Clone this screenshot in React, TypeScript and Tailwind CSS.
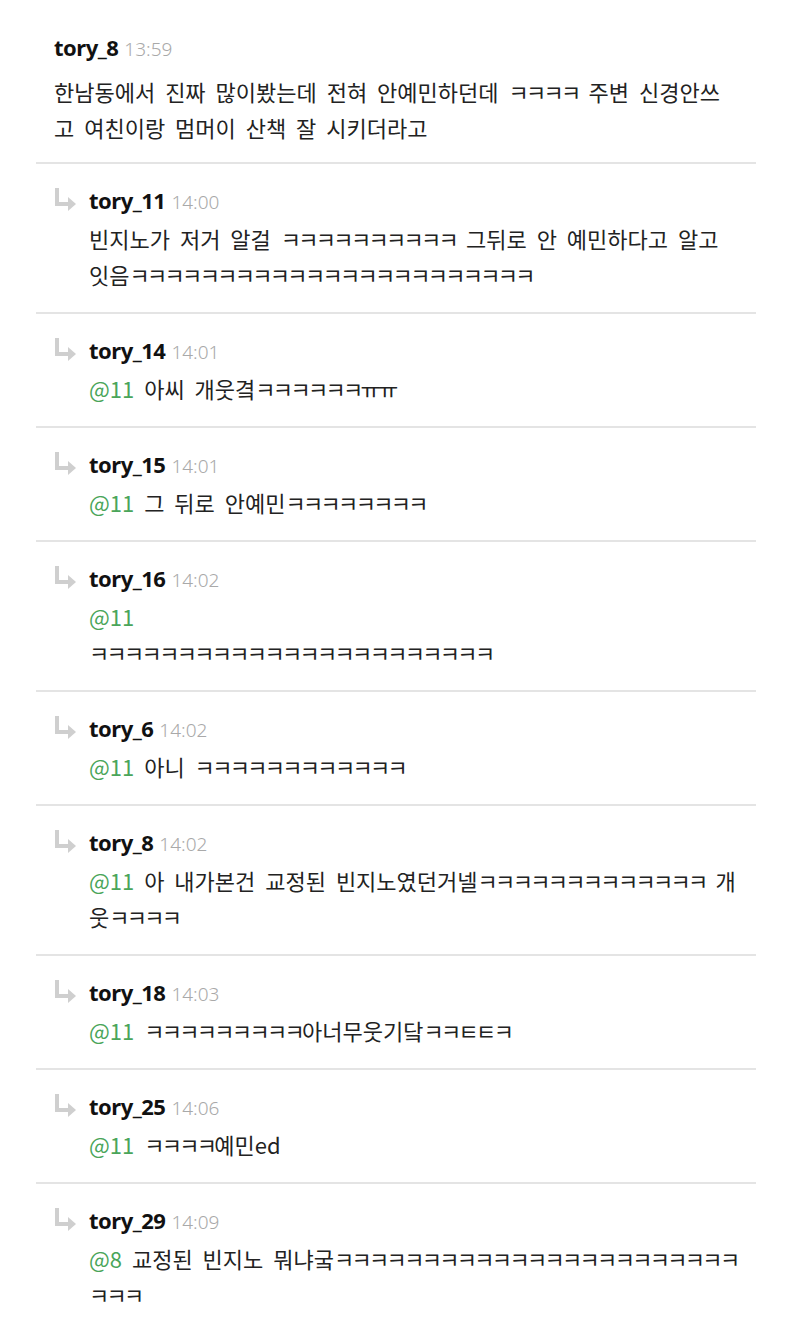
import React from 'react';

interface Reply {
  name: string;
  time: string;
  mention?: string;
  lines: string[];
}

const K = (n: number) => 'ㅋ'.repeat(n);

const replies: Reply[] = [
  { name: 'tory_11', time: '14:00', lines: [`빈지노가 저거 알걸 ${K(10)} 그뒤로 안 예민하다고 알고`, `잇음${K(23)}`] },
  { name: 'tory_14', time: '14:01', mention: '@11', lines: [`아씨 개웃곀${K(6)}ㅠㅠ`] },
  { name: 'tory_15', time: '14:01', mention: '@11', lines: [`그 뒤로 안예민${K(8)}`] },
  { name: 'tory_16', time: '14:02', mention: '@11', lines: ['', K(23)] },
  { name: 'tory_6', time: '14:02', mention: '@11', lines: [`아니 ${K(12)}`] },
  { name: 'tory_8', time: '14:02', mention: '@11', lines: [`아 내가본건 교정된 빈지노였던거넬${K(13)} 개`, `웃${K(4)}`] },
  { name: 'tory_18', time: '14:03', mention: '@11', lines: [`${K(9)}아너무웃기닼ㅋㅋㅌㅌㅋ`] },
  { name: 'tory_25', time: '14:06', mention: '@11', lines: [`${K(4)}예민ed`] },
  { name: 'tory_29', time: '14:09', mention: '@8', lines: [`교정된 빈지노 뭐냐궄${K(23)}`, K(3)] },
];

// jamo runs (ㅋㅋㅋ) are narrower than full syllables in the original font
const Body: React.FC<{ text: string }> = ({ text }) => (
  <>
    {text.split(/([ㄱ-ㅣ]+)/).map((part, i) =>
      /^[ㄱ-ㅣ]+$/.test(part) ? (
        <span key={i} className="tracking-[-2.7px]">
          {part}
        </span>
      ) : (
        <React.Fragment key={i}>{part}</React.Fragment>
      )
    )}
  </>
);

const ReplyArrow: React.FC = () => (
  <svg width="22" height="24" viewBox="0 0 22 24" className="mt-[-2px]">
    <path d="M2 1 V17 H14" fill="none" stroke="#cfcfcf" strokeWidth="4" />
    <path d="M13 10 L21 17 L13 24 Z" fill="#cfcfcf" />
  </svg>
);

const Header: React.FC<{ name: string; time: string }> = ({ name, time }) => (
  <div className="flex h-[35px] items-baseline gap-[6px] leading-[35px]">
    <span className="text-[22px] font-bold text-[#111] tracking-[-0.5px] [font-family:'Noto_Sans','Noto_Sans_CJK_KR',sans-serif]">
      {name}
    </span>
    <span className="text-[19px] font-light text-[#a9a9a9] [font-family:'Noto_Sans','Noto_Sans_CJK_KR',sans-serif]">
      {time}
    </span>
  </div>
);

const Line: React.FC<{ children: React.ReactNode }> = ({ children }) => (
  <div className="h-[36px] whitespace-nowrap text-[22px] leading-[36px] [word-spacing:5px]">
    {children}
  </div>
);

const App: React.FC = () => {
  return (
    <div className="min-h-[1342px] w-[792px] bg-white text-[#222] [font-family:'Noto_Sans_CJK_KR',sans-serif]">
      <div className="ml-[36px] w-[720px]">
        {/* Parent comment */}
        <div className="pl-[18px] pr-[8px] pt-[30px] pb-[17px]">
          <Header name="tory_8" time="13:59" />
          <div className="mt-[8px]">
            <Line>
              <Body text={`한남동에서 진짜 많이봤는데 전혀 안예민하던데 ${K(4)} 주변 신경안쓰`} />
            </Line>
            <Line>
              <Body text="고 여친이랑 멈머이 산책 잘 시키더라고" />
            </Line>
          </div>
        </div>

        {/* Replies */}
        {replies.map((r) => (
          <div key={r.name + r.time} className="flex border-t-2 border-[#e4e4e4] pl-[19px] pr-[8px] pt-[19px] pb-[20px]">
            <div className="w-[34px] shrink-0 pt-[6px]">
              <ReplyArrow />
            </div>
            <div className="min-w-0 flex-1">
              <Header name={r.name} time={r.time} />
              <div className="mt-[2px]">
                {r.lines.map((line, i) => (
                  <Line key={i}>
                    {i === 0 && r.mention && <span className="text-[#4aa55a]">{r.mention} </span>}
                    <Body text={line} />
                  </Line>
                ))}
              </div>
            </div>
          </div>
        ))}
      </div>
    </div>
  );
};

export default App;
